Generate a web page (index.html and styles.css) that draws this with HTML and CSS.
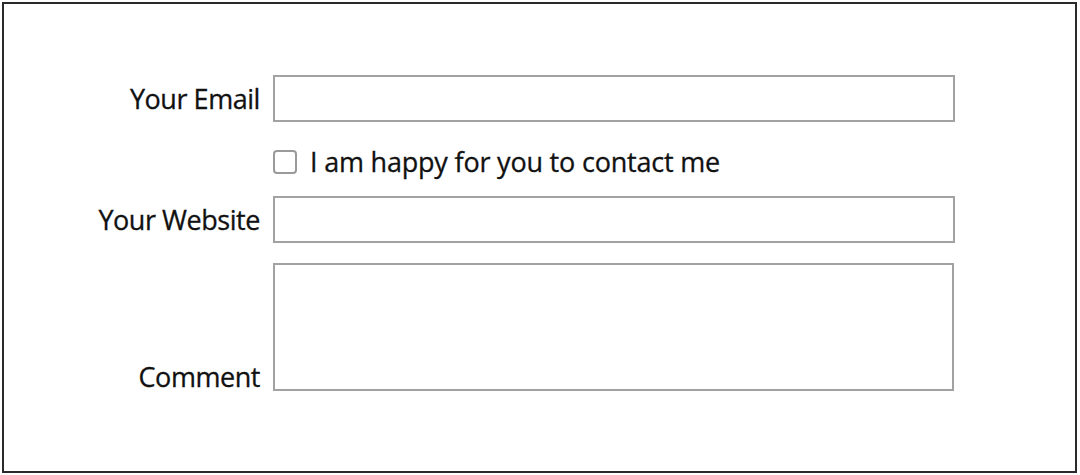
FILE: index.html
```html
<!DOCTYPE html>
<html>
<head>
<meta charset="utf-8">
<link rel="stylesheet" href="styles.css">
</head>
<body>
<div class="frame">
  <form class="form">
    <label class="label label-center" for="email">Your Email</label>
    <input class="field" id="email" type="text">

    <div class="spacer"></div>
    <label class="check-row"><span class="checkbox"></span><span class="check-text">I am happy for you to contact me</span></label>

    <label class="label label-center" for="site">Your Website</label>
    <input class="field" id="site" type="text">

    <label class="label label-end" for="comment">Comment</label>
    <textarea class="area" id="comment"></textarea>
  </form>
</div>
</body>
</html>
```

FILE: styles.css
```css
html, body {
  margin: 0;
  padding: 0;
  background: #ffffff;
}
body {
  font-family: "Open Sans", "DejaVu Sans", sans-serif;
  color: #111111;
}
.frame {
  margin: 2px;
  width: 1071px;
  height: 467px;
  border: 2px solid #2a2a2a;
  background: #ffffff;
}
.form {
  display: grid;
  grid-template-columns: 256px 682px;
  column-gap: 13px;
  padding-top: 71px;
}
.label {
  font-size: 27px;
  letter-spacing: -0.45px;
  -webkit-text-stroke: 0.3px #111;
  text-align: right;
  white-space: nowrap;
}
.label-center { align-self: center; }
.label-end { align-self: end; line-height: 26px; margin-bottom: 1px; }
.field {
  box-sizing: border-box;
  height: 47px;
  width: 682px;
  border: 2px solid #a2a2a2;
  margin: 0;
  padding: 0;
  background: #fff;
  outline: none;
}
.check-row {
  display: flex;
  align-items: center;
  margin-top: 28px;
  margin-bottom: 23px;
  height: 23px;
}
.checkbox {
  box-sizing: border-box;
  width: 24px;
  height: 24px;
  border: 2px solid #9a9a9a;
  border-radius: 4px;
  flex: none;
}
.check-text {
  font-size: 27px;
  letter-spacing: -0.2px;
  -webkit-text-stroke: 0.3px #111;
  margin-left: 13px;
}
.area {
  box-sizing: border-box;
  width: 681px;
  height: 128px;
  margin: 20px 0 0 0;
  border: 2px solid #a2a2a2;
  padding: 0;
  resize: none;
  outline: none;
  display: block;
}
```
